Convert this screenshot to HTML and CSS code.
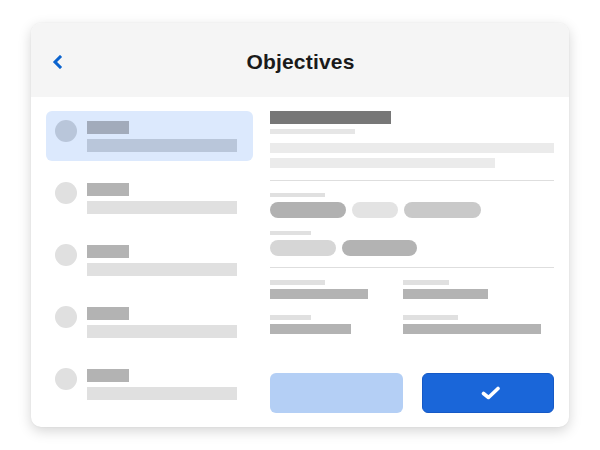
FILE: index.html
```html
<!DOCTYPE html>
<html lang="en">
<head>
<meta charset="utf-8">
<title>Objectives</title>
<link rel="stylesheet" href="styles.css">
</head>
<body>
<div class="card">
  <header class="header">
    <button class="back" aria-label="Back">
      <svg width="12" height="14" viewBox="0 0 12 14"><path d="M8 2 L3 7 L8 12" fill="none" stroke="#0b63ce" stroke-width="3" stroke-linecap="square" stroke-linejoin="miter"/></svg>
    </button>
    <h1 class="title">Objectives</h1>
    <span></span>
  </header>
  <div class="body">
    <ul class="list">
      <li class="item selected"><span class="dot"></span><span class="txt"><span class="t1"></span><span class="t2"></span></span></li>
      <li class="item"><span class="dot"></span><span class="txt"><span class="t1"></span><span class="t2"></span></span></li>
      <li class="item"><span class="dot"></span><span class="txt"><span class="t1"></span><span class="t2"></span></span></li>
      <li class="item"><span class="dot"></span><span class="txt"><span class="t1"></span><span class="t2"></span></span></li>
      <li class="item"><span class="dot"></span><span class="txt"><span class="t1"></span><span class="t2"></span></span></li>
    </ul>
    <section class="detail">
      <div class="d-title"></div>
      <div class="d-sub"></div>
      <div class="d-line l1"></div>
      <div class="d-line l2"></div>
      <hr class="divider first">
      <div class="label lw55"></div>
      <div class="pills">
        <span class="pill p-dark w76"></span>
        <span class="pill p-light w46"></span>
        <span class="pill p-mid w77"></span>
      </div>
      <div class="label lw41 gap13"></div>
      <div class="pills">
        <span class="pill p-soft w66"></span>
        <span class="pill p-dark2 w75"></span>
      </div>
      <hr class="divider second">
      <div class="fields">
        <div class="field"><span class="f-label w55"></span><span class="f-val w98"></span></div>
        <div class="field"><span class="f-label w46"></span><span class="f-val w85"></span></div>
        <div class="field"><span class="f-label w41"></span><span class="f-val w81"></span></div>
        <div class="field"><span class="f-label w55"></span><span class="f-val w138"></span></div>
      </div>
      <div class="actions">
        <button class="btn btn-secondary" aria-label="Cancel"></button>
        <button class="btn btn-primary" aria-label="Confirm">
          <svg class="check" width="20" height="14" viewBox="0 0 20 14"><path d="M2.5 7.5 L7.5 11.5 L17 2.5" fill="none" stroke="#fff" stroke-width="3.6" stroke-linecap="round" stroke-linejoin="round"/></svg>
        </button>
      </div>
    </section>
  </div>
</div>
</body>
</html>
```
FILE: styles.css
```css
* { box-sizing: border-box; }
html, body { margin: 0; background: #fff; }
body {
  padding: 23px 31px;
  font-family: "Liberation Sans", Arial, sans-serif;
}
.card {
  width: 538px;
  height: 404px;
  border-radius: 10px;
  background: #fff;
  box-shadow: 0 4px 13px rgba(0,0,0,0.17), 0 0 2px rgba(0,0,0,0.06);
  display: flex;
  flex-direction: column;
  overflow: hidden;
}
.header {
  height: 74px;
  flex: none;
  background: #f5f5f5;
  display: grid;
  grid-template-columns: 1fr auto 1fr;
  align-items: center;
  padding: 0 0 0 21px;
}
.back {
  justify-self: start;
  border: 0;
  background: none;
  padding: 0;
  width: 12px;
  height: 14px;
  display: flex;
  margin-top: 4px;
}
.title {
  margin: 4px 0 0;
  font-size: 21px;
  font-weight: 700;
  color: #1a1a1a;
  letter-spacing: 0.2px;
  position: relative;
  left: -10px;
}
.body {
  flex: 1;
  display: flex;
  gap: 17px;
  padding: 14px 15px 14px 15px;
}
.list {
  list-style: none;
  margin: 0;
  padding: 0;
  width: 207px;
  display: flex;
  flex-direction: column;
  gap: 12px;
}
.item {
  height: 50px;
  border-radius: 6px;
  display: flex;
  align-items: flex-start;
  gap: 10px;
  padding: 9px 9px;
}
.dot {
  width: 22px;
  height: 22px;
  border-radius: 50%;
  background: #e0e0e0;
  flex: none;
}
.txt { display: flex; flex-direction: column; gap: 5px; padding-top: 1px; }
.t1 { width: 42px; height: 13px; background: #b3b3b3; }
.t2 { width: 150px; height: 13px; background: #e0e0e0; }
.item.selected { background: #dce9fd; }
.item.selected .dot { background: #b9c6da; }
.item.selected .t1 { background: #a2abbb; }
.item.selected .t2 { background: #b9c6da; }

.detail {
  flex: 1;
  display: flex;
  flex-direction: column;
}
.d-title { width: 121px; height: 13px; background: #777; }
.d-sub { width: 85px; height: 5px; background: #e6e6e6; margin-top: 5px; }
.d-line { height: 10px; background: #ebebeb; }
.d-line.l1 { width: 284px; margin-top: 9px; }
.d-line.l2 { width: 225px; margin-top: 5px; }
.divider { border: 0; height: 1px; background: #dedede; margin: 0; width: 284px; }
.divider.first { margin-top: 12px; }
.divider.second { margin-top: 11px; }
.label { height: 4px; background: #e0e0e0; margin-top: 12px; }
.lw55 { width: 55px; }
.lw41 { width: 41px; }
.label.gap13 { margin-top: 13px; }
.pills { display: flex; gap: 6px; margin-top: 5px; }
.pill { height: 16px; border-radius: 8px; }
.p-dark { background: #b1b1b1; }
.p-light { background: #e3e3e3; }
.p-mid { background: #c9c9c9; }
.p-soft { background: #d6d6d6; }
.p-dark2 { background: #b3b3b3; }
.w76 { width: 76px; }
.w46 { width: 46px; }
.w77 { width: 77px; }
.w66 { width: 66px; }
.w75 { width: 75px; }
.fields {
  display: grid;
  grid-template-columns: 133px 1fr;
  row-gap: 16px;
  margin-top: 12px;
}
.field { display: flex; flex-direction: column; gap: 4px; }
.f-label { height: 5px; background: #e0e0e0; }
.f-val { height: 10px; background: #b3b3b3; }
.w55 { width: 55px; }
.w41 { width: 41px; }
.w98 { width: 98px; }
.w85 { width: 85px; }
.w81 { width: 81px; }
.w138 { width: 138px; }
.actions {
  margin-top: auto;
  display: flex;
  gap: 19px;
}
.btn {
  width: 133px;
  height: 40px;
  border-radius: 6px;
  border: 0;
  padding: 0;
  display: flex;
  align-items: center;
  justify-content: center;
}
.btn-secondary { background: #b4cff5; }
.btn-primary { background: #1a66d9; border: 1px solid #1559c6; width: 132px; }
.check { margin-left: 5px; }
```
